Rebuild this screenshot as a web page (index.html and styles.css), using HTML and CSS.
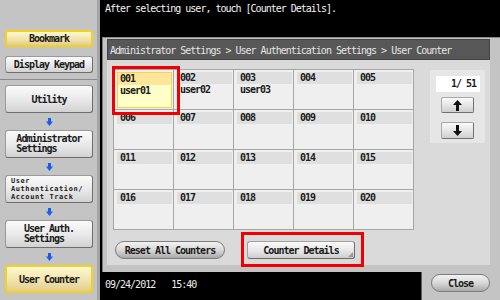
FILE: index.html
```html
<!DOCTYPE html>
<html lang="en">
<head>
<meta charset="utf-8">
<title>User Counter</title>
<link rel="stylesheet" href="styles.css">
</head>
<body>
<div class="app">
  <aside class="sidebar">
    <div class="side-top">
      <button class="sbtn short yellow">Bookmark</button>
      <button class="sbtn short">Display Keypad</button>
    </div>
    <div class="side-flow">
      <button class="sbtn tall">Utility</button>
      <svg class="arrow" width="7" height="8" viewBox="0 0 7 8"><rect x="2" y="0" width="3" height="4"/><polygon points="0,3.5 7,3.5 3.5,8"/></svg>
      <button class="sbtn tall"><span class="lbl">Administrator<br>Settings</span></button>
      <svg class="arrow" width="7" height="8" viewBox="0 0 7 8"><rect x="2" y="0" width="3" height="4"/><polygon points="0,3.5 7,3.5 3.5,8"/></svg>
      <button class="sbtn tall"><span class="lbl tiny">User<br>Authentication/<br>Account Track</span></button>
      <svg class="arrow" width="7" height="8" viewBox="0 0 7 8"><rect x="2" y="0" width="3" height="4"/><polygon points="0,3.5 7,3.5 3.5,8"/></svg>
      <button class="sbtn tall"><span class="lbl">User Auth.<br>Settings</span></button>
      <svg class="arrow" width="7" height="8" viewBox="0 0 7 8"><rect x="2" y="0" width="3" height="4"/><polygon points="0,3.5 7,3.5 3.5,8"/></svg>
      <button class="sbtn tall yellow">User Counter</button>
    </div>
  </aside>
  <main class="main">
    <div class="message">After selecting user, touch [Counter Details].</div>
    <section class="panel">
      <div class="inner">
        <div class="crumb">Administrator Settings &gt; User Authentication Settings &gt; User Counter</div>
        <div class="content">
          <div class="grid">
            <div class="cell selected"><div class="cell-body"><div class="num">001</div><div class="name">user01</div></div><span class="mark mark-cell"></span></div>
            <div class="cell"><div class="cell-body"><div class="num">002</div><div class="name">user02</div></div></div>
            <div class="cell"><div class="cell-body"><div class="num">003</div><div class="name">user03</div></div></div>
            <div class="cell"><div class="cell-body"><div class="num">004</div></div></div>
            <div class="cell"><div class="cell-body"><div class="num">005</div></div></div>
            <div class="cell"><div class="cell-body"><div class="num">006</div></div></div>
            <div class="cell"><div class="cell-body"><div class="num">007</div></div></div>
            <div class="cell"><div class="cell-body"><div class="num">008</div></div></div>
            <div class="cell"><div class="cell-body"><div class="num">009</div></div></div>
            <div class="cell"><div class="cell-body"><div class="num">010</div></div></div>
            <div class="cell"><div class="cell-body"><div class="num">011</div></div></div>
            <div class="cell"><div class="cell-body"><div class="num">012</div></div></div>
            <div class="cell"><div class="cell-body"><div class="num">013</div></div></div>
            <div class="cell"><div class="cell-body"><div class="num">014</div></div></div>
            <div class="cell"><div class="cell-body"><div class="num">015</div></div></div>
            <div class="cell"><div class="cell-body"><div class="num">016</div></div></div>
            <div class="cell"><div class="cell-body"><div class="num">017</div></div></div>
            <div class="cell"><div class="cell-body"><div class="num">018</div></div></div>
            <div class="cell"><div class="cell-body"><div class="num">019</div></div></div>
            <div class="cell"><div class="cell-body"><div class="num">020</div></div></div>
          </div>
          <div class="pager">
            <div class="page-field">1/ 51</div>
            <button class="pbtn up"><svg width="9" height="11" viewBox="0 0 9 11"><polygon points="4.5,0 9,5 6,5 6,11 3,11 3,5 0,5"/></svg></button>
            <button class="pbtn down"><svg width="9" height="11" viewBox="0 0 9 11"><polygon points="4.5,11 9,6 6,6 6,0 3,0 3,6 0,6"/></svg></button>
          </div>
        </div>
        <div class="actions">
          <button class="pill">Reset All Counters</button>
          <button class="detail">Counter Details<span class="corner"></span><span class="mark mark-btn"></span></button>
        </div>
      </div>
    </section>
    <div class="datebar"><span>09/24/2012</span><span>15:40</span></div>
    <div class="closetab"><button class="close">Close</button></div>
  </main>
</div>
</body>
</html>
```
FILE: styles.css
```css
* { box-sizing: border-box; }
html, body { margin: 0; padding: 0; }
body {
  width: 500px;
  height: 300px;
  overflow: hidden;
  background: #000;
  font-family: "DejaVu Sans Mono", "Liberation Mono", monospace;
  font-size: 10px;
  letter-spacing: -1px;
  color: #1a1a1a;
}
button {
  font-family: inherit;
  font-size: inherit;
  letter-spacing: inherit;
  color: inherit;
  padding: 0;
  margin: 0;
  cursor: pointer;
}
.app {
  display: flex;
  width: 500px;
  height: 300px;
}

/* Sidebar */
.sidebar {
  width: 100px;
  height: 300px;
  background: #c4c4c4;
  border-right: 3px solid #a4a4a4;
  display: flex;
  flex-direction: column;
}
.side-top {
  height: 80px;
  padding: 30px 0 0 5px;
  display: flex;
  flex-direction: column;
  gap: 9px;
  border-bottom: 1px solid #8a8a8a;
}
.side-flow {
  padding: 5px 0 0 5px;
  display: flex;
  flex-direction: column;
  align-items: flex-start;
}
.sbtn {
  width: 88px;
  border: 1px solid #9a9a9a;
  border-right-color: #6e6e6e;
  border-bottom-color: #6e6e6e;
  border-radius: 3px;
  background: linear-gradient(#fbfbfb, #e8e8e8 55%, #d2d2d2);
  font-weight: bold;
  display: flex;
  align-items: center;
  justify-content: center;
}
.sbtn.short { height: 17px; }
.sbtn.tall { height: 28px; }
.sbtn.yellow {
  border: 2px solid #f2d21e;
  background: linear-gradient(#fff8d0, #f2e6b0 50%, #e2cf8e);
}
.lbl {
  text-align: left;
  line-height: 10px;
}
.lbl.tiny {
  font-size: 7px;
  letter-spacing: 0.6px;
  line-height: 8px;
  margin-left: -4px;
}
.arrow {
  fill: #1d5ce6;
  margin: 5px 0 4px 41px;
}

/* Main */
.main {
  flex: 1;
  display: grid;
  grid-template-columns: 1fr 79px;
  grid-template-rows: 37px 1fr 28px;
}
.message {
  grid-column: 1 / 3;
  color: #f4f4f4;
  padding: 3px 0 0 5px;
  line-height: 12px;
}
.panel {
  grid-column: 1 / 3;
  margin-left: 2px;
  background: #c4c4c4;
  border-left: 1px solid #7c7c7c;
  border-top: 1px solid #8a8a8a;
  padding: 1px 10px 7px 4px;
}
.inner {
  height: 100%;
  background: #dadada;
  display: flex;
  flex-direction: column;
}
.crumb {
  height: 21px;
  line-height: 21px;
  background: #575757;
  border: 1px solid #444;
  color: #e6e6e6;
  padding-left: 2px;
  white-space: nowrap;
}
.content {
  display: flex;
  gap: 16px;
  padding: 9px 0 0 6px;
}
.grid {
  display: grid;
  grid-template-columns: repeat(5, 59px);
  grid-template-rows: repeat(4, 39px);
  gap: 1px;
  padding: 1px;
  background: #a6a6a6;
}
.cell {
  position: relative;
  background: #efefef;
  padding: 2px 1px 1px 3px;
}
.cell-body {
  height: 100%;
}
.num {
  height: 12px;
  line-height: 12px;
  background: #dfdfdf;
  padding-left: 3px;
  font-weight: bold;
}
.name {
  padding-left: 3px;
  line-height: 11px;
  font-weight: bold;
}
.cell.selected .cell-body {
  background: #ffffc8;
  border: 1px solid #f0d64a;
}
.cell.selected .num {
  background: #fde69a;
  padding-left: 2px;
}
.cell.selected .name { padding-left: 2px; }

.mark {
  position: absolute;
  z-index: 5;
  border: 3px solid #f00000;
  pointer-events: none;
}
.mark-cell {
  left: -2px;
  top: -4px;
  width: 68px;
  height: 49px;
}

.pager {
  width: 55px;
  height: 73px;
  margin-top: 1px;
  background: #e6e6e6;
  padding: 6px 0 0 6px;
  display: flex;
  flex-direction: column;
  align-items: flex-start;
}
.page-field {
  width: 44px;
  height: 16px;
  background: #fff;
  text-align: right;
  padding-right: 4px;
  line-height: 16px;
  font-weight: bold;
}
.pbtn {
  width: 33px;
  height: 16px;
  margin-left: 5px;
  border: 1px solid #a8a8a8;
  border-right-color: #707070;
  border-bottom-color: #707070;
  border-radius: 2px;
  background: linear-gradient(#fafafa, #e4e4e4 55%, #cfcfcf);
  display: flex;
  align-items: center;
  justify-content: center;
}
.pbtn svg { fill: #111; }
.pbtn.up { margin-top: 5px; }
.pbtn.down { margin-top: 9px; height: 17px; }

.actions {
  display: flex;
  align-items: flex-start;
  gap: 22px;
  padding: 11px 0 0 8px;
}
.pill {
  width: 110px;
  height: 18px;
  border: 1px solid #7c7c7c;
  border-radius: 9px;
  background: linear-gradient(#f2f2f2, #d8d8d8 50%, #a9a9a9);
  font-weight: bold;
}
.detail {
  position: relative;
  width: 108px;
  height: 18px;
  border: 1px solid #a0a0a0;
  border-right-color: #6c6c6c;
  border-bottom-color: #6c6c6c;
  border-radius: 3px;
  background: linear-gradient(#fafafa, #e6e6e6 55%, #cdcdcd);
  font-weight: bold;
}
.corner {
  position: absolute;
  right: 1px;
  bottom: 1px;
  width: 0;
  height: 0;
  border-left: 5px solid transparent;
  border-bottom: 5px solid #9a9a9a;
}
.mark-btn {
  left: -7px;
  top: -10px;
  width: 123px;
  height: 35px;
}

.datebar {
  display: flex;
  gap: 16px;
  color: #ececec;
  padding: 0 0 0 5px;
  line-height: 25px;
}
.closetab {
  background: #c4c4c4;
  border-left: 1px solid #5e5e5e;
  padding: 2px 0 0 9px;
}
.close {
  width: 59px;
  height: 18px;
  border: 1px solid #7c7c7c;
  border-radius: 9px;
  background: linear-gradient(#f2f2f2, #d8d8d8 50%, #a9a9a9);
  font-weight: bold;
}
```
